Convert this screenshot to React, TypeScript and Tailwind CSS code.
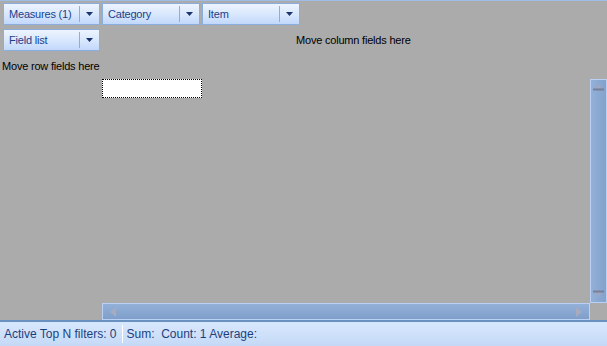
import React from 'react';

const font = { fontFamily: '"Liberation Sans", Arial, sans-serif' };

function FieldButton({ label, wide }: { label: string; wide?: boolean }) {
  return (
    <div className={`flex h-[22px] items-center border border-[#8aaede] bg-gradient-to-b from-[#edf4fe] via-[#d9e8fd] to-[#c2d8fa] text-[11px] tracking-[-0.2px] text-[#1a3f8c] ${wide ? 'w-[98px]' : 'w-[97px]'}`}>
      <span className="flex-1 whitespace-nowrap pl-[5px] leading-none">{label}</span>
      <span className="h-[16px] w-px bg-[#8aaede]" />
      <span className="flex w-[19px] justify-center">
        <svg width="7" height="4" viewBox="0 0 7 4">
          <path d="M0 0h7L3.5 4z" fill="#1a3370" />
        </svg>
      </span>
    </div>
  );
}

function ScrollArrow({ dir }: { dir: 'up' | 'down' | 'left' | 'right' }) {
  if (dir === 'up' || dir === 'down') {
    return (
      <svg width="11" height="7" viewBox="0 0 11 7" className={dir === 'down' ? 'rotate-180' : ''}>
        <path d="M5.5 0L8.5 4h-6z" fill="#a2a6bf" />
        <rect x="0" y="4.5" width="11" height="2" fill="#7a7e96" />
      </svg>
    );
  }
  return (
    <svg width="6" height="10" viewBox="0 0 6 10" className={dir === 'right' ? 'rotate-180' : ''}>
      <path d="M0 5L6 0v10z" fill="#a6abc0" />
    </svg>
  );
}

export default function App() {
  return (
    <div className="flex h-[346px] w-[607px] flex-col overflow-hidden border-t border-[#9dbde6] bg-[#ababab] text-black" style={font}>
      {/* Filter / data fields */}
      <div className="flex gap-[2px] pl-[3px] pt-[2px]">
        <FieldButton label="Measures (1)" />
        <FieldButton label="Category" wide />
        <FieldButton label="Item" wide />
      </div>
      <div className="flex items-center pl-[3px] pt-[4px]">
        <FieldButton label="Field list" />
        <span className="ml-[196px] text-[11px] leading-none tracking-[-0.2px]">Move column fields here</span>
      </div>
      <div className="pl-[2px] pt-[10px] text-[11px] leading-none tracking-[-0.2px]">Move row fields here</div>

      {/* Grid area */}
      <div className="flex flex-1 flex-col pl-[102px] pt-[7px]">
        <div className="flex flex-1">
          <div className="flex-1">
            <div className="h-[19px] w-[100px] border border-dotted border-black bg-white" />
          </div>
          <div className="flex w-[17px] flex-col items-center justify-between border border-[#b8d1f4] bg-gradient-to-r from-[#93b0d8] to-[#82a2cc] pb-[5px] pt-[4px]">
            <ScrollArrow dir="up" />
            <ScrollArrow dir="down" />
          </div>
        </div>
        <div className="flex h-[17px]">
          <div className="flex flex-1 items-center justify-between border border-[#b8d1f4] bg-gradient-to-b from-[#93b0d8] to-[#7f9fca] px-[7px]">
            <ScrollArrow dir="left" />
            <ScrollArrow dir="right" />
          </div>
          <div className="w-[17px]" />
        </div>
      </div>

      {/* Status bar */}
      <div className="flex h-[26px] items-center border-t-2 border-[#6a90c0] bg-gradient-to-b from-[#d7e7fc] via-[#cfe1fa] to-[#c4d9f7] text-[12px] text-[#1b3f7e]">
        <span className="pl-[4px] pr-[5px]">Active Top N filters: 0</span>
        <span className="h-[18px] w-px bg-white" />
        <span className="pl-[4px]">Sum:&nbsp; Count: 1 Average:</span>
      </div>
    </div>
  );
}
